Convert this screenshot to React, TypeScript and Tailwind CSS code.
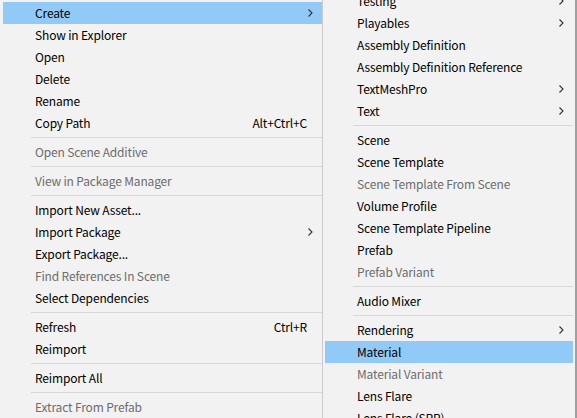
type Item =
  | { sep: true }
  | { sep?: false; label: string; shortcut?: string; sub?: boolean; disabled?: boolean; active?: boolean };

const leftItems: Item[] = [
  { label: 'Create', sub: true, active: true },
  { label: 'Show in Explorer' },
  { label: 'Open' },
  { label: 'Delete' },
  { label: 'Rename' },
  { label: 'Copy Path', shortcut: 'Alt+Ctrl+C' },
  { sep: true },
  { label: 'Open Scene Additive', disabled: true },
  { sep: true },
  { label: 'View in Package Manager', disabled: true },
  { sep: true },
  { label: 'Import New Asset...' },
  { label: 'Import Package', sub: true },
  { label: 'Export Package...' },
  { label: 'Find References In Scene', disabled: true },
  { label: 'Select Dependencies' },
  { sep: true },
  { label: 'Refresh', shortcut: 'Ctrl+R' },
  { label: 'Reimport' },
  { sep: true },
  { label: 'Reimport All' },
  { sep: true },
  { label: 'Extract From Prefab', disabled: true },
];

const rightItems: Item[] = [
  { label: 'Testing', sub: true },
  { label: 'Playables', sub: true },
  { label: 'Assembly Definition' },
  { label: 'Assembly Definition Reference' },
  { label: 'TextMeshPro', sub: true },
  { label: 'Text', sub: true },
  { sep: true },
  { label: 'Scene' },
  { label: 'Scene Template' },
  { label: 'Scene Template From Scene', disabled: true },
  { label: 'Volume Profile' },
  { label: 'Scene Template Pipeline' },
  { label: 'Prefab' },
  { label: 'Prefab Variant', disabled: true },
  { sep: true },
  { label: 'Audio Mixer' },
  { sep: true },
  { label: 'Rendering', sub: true },
  { label: 'Material', active: true },
  { label: 'Material Variant', disabled: true },
  { label: 'Lens Flare' },
  { label: 'Lens Flare (SRP)' },
];

function Chevron() {
  return (
    <svg width="5" height="8" viewBox="0 0 5 8" className="shrink-0">
      <polyline points="0.5,0.5 4,4 0.5,7.5" fill="none" stroke="#333" strokeWidth="1.1" />
    </svg>
  );
}

function Menu({ items }: { items: Item[] }) {
  return (
    <div className="flex flex-col">
      {items.map((it, i) =>
        it.sep ? (
          <div key={i} className="h-[7px] flex items-center pl-[28px]">
            <div className="h-px w-full bg-[#d7d7d7]" />
          </div>
        ) : (
          <div
            key={i}
            className={`h-[22px] flex items-center pl-[32px] pr-[9px] pb-px ${it.active ? 'bg-[#91c9f7]' : ''} ${
              it.disabled ? 'text-[#6d6d6d]' : 'text-black'
            }`}
          >
            <span className="flex-1 whitespace-nowrap">{it.label}</span>
            {it.shortcut && <span className="mr-[6px] whitespace-nowrap">{it.shortcut}</span>}
            {it.sub && <Chevron />}
          </div>
        )
      )}
    </div>
  );
}

export default function App() {
  return (
    <div
      className="w-[577px] h-[418px] overflow-hidden flex bg-[#f2f2f2] text-[12px] tracking-[-0.15px]"
      style={{ fontFamily: '"Noto Sans CJK KR", "Noto Sans", sans-serif' }}
    >
      <div className="w-[323px] shrink-0 pl-[3px] pt-[2px] border-r border-[#cccccc]">
        <Menu items={leftItems} />
      </div>
      <div className="flex-1 -mt-[10px] pl-[2px] pr-[2px] border-r-2 border-[#a0a0a0]">
        <Menu items={rightItems} />
      </div>
    </div>
  );
}
